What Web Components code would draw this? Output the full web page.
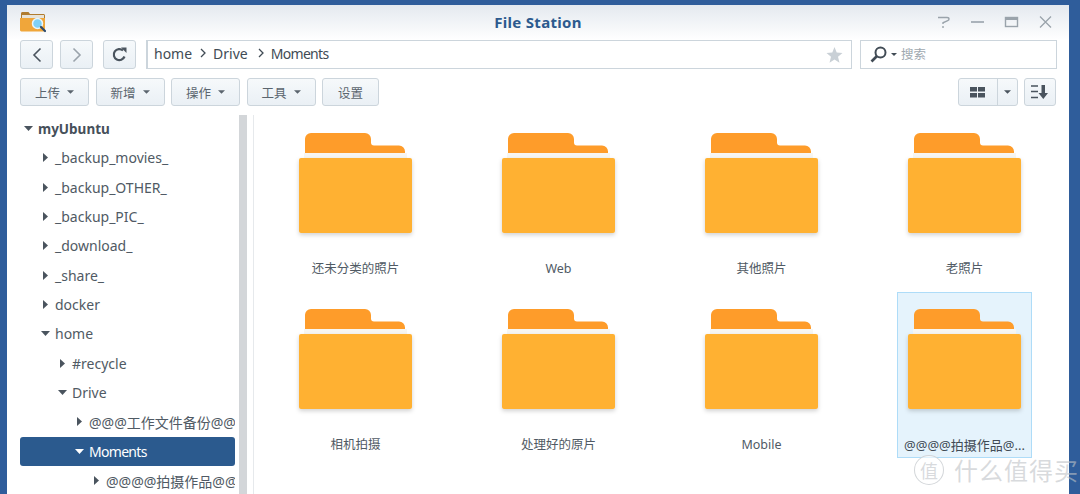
<!DOCTYPE html>
<html>
<head>
<meta charset="utf-8">
<title>File Station</title>
<style>
html, body { margin: 0; height: 100%; overflow: hidden; }
body {
    background: #2f5d9b;
    font-family: "Noto Sans", "Noto Sans CJK SC", sans-serif;
    color: #505a64;
}
</style>
</head>
<body>
<fs-window>
    <fs-titlebar slot="title">File Station</fs-titlebar>
    <fs-navbar slot="nav"></fs-navbar>
    <fs-toolbar slot="tools"></fs-toolbar>
    <fs-tree slot="tree"></fs-tree>
    <fs-grid slot="grid">
        <fs-folder>还未分类的照片</fs-folder>
        <fs-folder>Web</fs-folder>
        <fs-folder>其他照片</fs-folder>
        <fs-folder>老照片</fs-folder>
        <fs-folder>相机拍摄</fs-folder>
        <fs-folder>处理好的原片</fs-folder>
        <fs-folder>Mobile</fs-folder>
        <fs-folder selected>@@@@拍摄作品@...</fs-folder>
    </fs-grid>
</fs-window>
<fs-watermark></fs-watermark>

<script>
const caret = `<svg width="7" height="4" viewBox="0 0 8 4"><path d="M0 0h8L4 4z" fill="currentColor"/></svg>`;

class FsWindow extends HTMLElement {
    constructor() {
        super();
        this.attachShadow({mode: "open"}).innerHTML = `
            <style>
            :host {
                display: flex;
                flex-direction: column;
                box-sizing: border-box;
                width: 1062px;
                height: 489px;
                margin: 5px 0 0 7px;
                background: #fff;
                overflow: hidden;
            }
            .main {
                display: flex;
                flex: 1;
                min-height: 0;
                margin-top: 9px;
            }
            .bar {
                width: 8px;
                margin-left: 4px;
                background: #d3d6d9;
                flex: none;
            }
            .line {
                width: 1px;
                margin-left: 6px;
                background: #e6e9ec;
                flex: none;
            }
            </style>
            <slot name="title"></slot>
            <slot name="nav"></slot>
            <slot name="tools"></slot>
            <div class="main">
                <slot name="tree"></slot>
                <div class="bar"></div>
                <div class="line"></div>
                <slot name="grid"></slot>
            </div>
        `;
    }
}

class FsTitlebar extends HTMLElement {
    constructor() {
        super();
        this.attachShadow({mode: "open"}).innerHTML = `
            <style>
            :host {
                display: grid;
                grid-template-columns: 1fr auto 1fr;
                align-items: center;
                height: 35px;
                padding: 0 13px;
                background: linear-gradient(#e4e9ef, #ffffff);
            }
            .title {
                font-weight: 700;
                font-size: 15px;
                letter-spacing: .3px;
                color: #2c5a8e;
                padding-bottom: 2px;
            }
            .app { display: block; margin-top: -1px; }
            .ctl {
                display: flex;
                justify-content: flex-end;
                align-items: center;
                gap: 19px;
                padding-right: 3px;
                margin-top: -1px;
            }
            </style>
            <svg class="app" width="26" height="22" viewBox="0 0 26 22">
                <path d="M1 2.500C1 1.600 1.600 1 2.500 1h6L10 3h13.500c.8 0 1.500.7 1.500 1.500V8H1z" fill="#b07c30"/>
                <rect x="2" y="4" width="22" height="3" fill="#e7e3d8"/>
                <path d="M0 7h25v12c0 .8-.6 1.400-1.400 1.400H1.400C.6 20.400 0 19.800 0 19z" fill="#f0a63a"/>
                <circle cx="17.500" cy="12.500" r="5" fill="#7fd0f5" stroke="#e9f5fb" stroke-width="1.500"/>
                <path d="M21 16l4 4" stroke="#2b4a6c" stroke-width="2.200" stroke-linecap="round"/>
            </svg>
            <div class="title"><slot></slot></div>
            <div class="ctl">
                <svg width="15" height="14" viewBox="0 0 15 14"><path d="M2 2.500h9c1.500 0 2 .8 2 1.500 0 .8-.5 1.400-1.300 1.700L7 7.800V9M7 11v2" fill="none" stroke="#9aa3ab" stroke-width="1.400"/></svg>
                <svg width="15" height="14" viewBox="0 0 15 14"><path d="M1 7h13" stroke="#9aa3ab" stroke-width="1.600"/></svg>
                <svg width="15" height="14" viewBox="0 0 15 14"><rect x="1.500" y="2.500" width="12" height="9" fill="none" stroke="#9aa3ab" stroke-width="1.400"/><rect x="1" y="2" width="13" height="3" fill="#9aa3ab"/></svg>
                <svg width="15" height="14" viewBox="0 0 15 14"><path d="M2 1.500l11 11M13 1.500l-11 11" stroke="#9aa3ab" stroke-width="1.300"/></svg>
            </div>
        `;
    }
}

class FsButton extends HTMLElement {
    constructor() {
        super();
        this.attachShadow({mode: "open"}).innerHTML = `
            <style>
            :host {
                display: inline-flex;
                align-items: center;
                justify-content: center;
                gap: 7px;
                box-sizing: border-box;
                height: 29px;
                border: 1px solid #ccd5dc;
                border-radius: 3px;
                background: linear-gradient(#f6f9fb, #eaf0f5);
                font-size: 12.500px;
                color: #5b656e;
                flex: none;
            }
            svg, ::slotted(svg) { display: block; }
            </style>
            <slot></slot>
        `;
    }
}

class FsNavbar extends HTMLElement {
    constructor() {
        super();
        this.attachShadow({mode: "open"}).innerHTML = `
            <style>
            :host {
                display: flex;
                align-items: center;
                height: 29px;
                padding: 0 12px 0 13px;
            }
            fs-button { width: 33px; }
            .path {
                flex: none;
                display: flex;
                align-items: center;
                box-sizing: border-box;
                width: 706px;
                height: 29px;
                margin-left: 10px;
                padding: 0 8px 3px 6px;
                border: 1px solid #ccd5dc;
                border-left-width: 2px;
                font-size: 14px;
                color: #414b55;
            }
            .path svg { margin: 0 7px 0 8px; }
            .now { letter-spacing: -.7px; }
            .star { margin: 3px 0 0 auto !important; }
            .search {
                display: flex;
                align-items: center;
                box-sizing: border-box;
                width: 197px;
                height: 29px;
                margin-left: 8px;
                padding: 0 0 2px 9px;
                border: 1px solid #ccd5dc;
                font-size: 12.500px;
                color: #a0a8af;
            }
            .search span { margin-left: 4px; }
            .search .c { margin-left: 3px; color: #414b55; }
            </style>
            <fs-button>
                <svg width="10" height="16" viewBox="0 0 10 16"><path d="M8.500 1.500L2 8l6.500 6.500" fill="none" stroke="#4a545e" stroke-width="1.600"/></svg>
            </fs-button>
            <fs-button style="margin-left:7px">
                <svg width="10" height="16" viewBox="0 0 10 16"><path d="M1.500 1.500L8 8l-6.500 6.500" fill="none" stroke="#9aa3ab" stroke-width="1.600"/></svg>
            </fs-button>
            <fs-button style="margin-left:10px">
                <svg width="15" height="15" viewBox="0 0 15 15"><path d="M12.500 9.500A5.500 5.500 0 1 1 11 3.500" fill="none" stroke="#4a545e" stroke-width="2.200"/><path d="M9 .5h5.500V6z" fill="#4a545e"/></svg>
            </fs-button>
            <div class="path">
                home
                <svg width="6" height="10" viewBox="0 0 6 10"><path d="M1 1l4 4-4 4" fill="none" stroke="#414b55" stroke-width="1.300"/></svg>
                Drive
                <svg width="6" height="10" viewBox="0 0 6 10" style="margin-left:10px"><path d="M1 1l4 4-4 4" fill="none" stroke="#414b55" stroke-width="1.300"/></svg>
                <span class="now">Moments</span>
                <svg class="star" width="17" height="16" viewBox="0 0 17 16"><path d="M8.500 0l2.200 5.600 5.800.4-4.500 3.800 1.500 5.900-5-3.200-5 3.200 1.500-5.900L.5 6l5.800-.4z" fill="#c9d0d6"/></svg>
            </div>
            <div class="search">
                <svg width="18" height="17" viewBox="0 0 18 17" style="margin-top:2px"><circle cx="10.500" cy="6.500" r="5" fill="none" stroke="#414b55" stroke-width="2"/><path d="M7 10l-5.500 5.500" stroke="#414b55" stroke-width="2.600"/></svg>
                <span class="c" style="display:flex;margin-top:2px">${caret.replace('width="7" height="4"', 'width="6" height="3"')}</span>
                <span>搜索</span>
            </div>
        `;
    }
}

class FsToolbar extends HTMLElement {
    constructor() {
        super();
        this.attachShadow({mode: "open"}).innerHTML = `
            <style>
            :host {
                display: flex;
                align-items: center;
                height: 28px;
                margin-top: 9px;
                padding: 0 13px;
                gap: 6.500px;
            }
            fs-button { width: 69px; height: 28px; }
            .view { width: 60px; margin-left: auto; gap: 0; padding: 0; }
            .view div { display: flex; align-items: center; justify-content: center; height: 100%; }
            .view .a { width: 38px; border-right: 1px solid #ccd5dc; }
            .view .b { flex: 1; color: #4a545e; }
            .sort { width: 32px; }
            </style>
            <fs-button>上传 ${caret}</fs-button>
            <fs-button>新增 ${caret}</fs-button>
            <fs-button>操作 ${caret}</fs-button>
            <fs-button>工具 ${caret}</fs-button>
            <fs-button style="width:57px">设置</fs-button>
            <fs-button class="view">
                <div class="a"><svg width="15" height="11" viewBox="0 0 15 11"><path d="M0 0h7v4.500H0zM8 0h7v4.500H8zM0 6h7v4.500H0zM8 6h7v4.500H8z" fill="#4a545e"/></svg></div>
                <div class="b">${caret}</div>
            </fs-button>
            <fs-button class="sort">
                <svg width="18" height="14" viewBox="0 0 18 14"><path d="M0 1h7M0 6.500h7M0 12.500h7" stroke="#4a545e" stroke-width="1.500"/><path d="M10.500 0h3.500v8h3l-4.700 6-4.800-6h3z" fill="#4a545e"/></svg>
            </fs-button>
        `;
    }
}

class FsTreeRow extends HTMLElement {
    constructor() {
        super();
        this.attachShadow({mode: "open"}).innerHTML = `
            <style>
            :host {
                display: flex;
                align-items: center;
                box-sizing: border-box;
                height: 29.330px;
                flex: none;
                font-size: 14px;
                color: #505a64;
                white-space: nowrap;
                overflow: hidden;
                border-radius: 3px;
            }
            :host([root]) { font-weight: 700; color: #46505a; font-size: 13.500px; }
            :host([active]) { background: #2b5a8e; color: #fff; letter-spacing: -.7px; }
            .arrow {
                display: flex;
                align-items: center;
                justify-content: center;
                width: 11px;
                flex: none;
                margin-right: 4px;
                color: #4a545e;
            }
            :host([active]) .arrow { color: #fff; }
            </style>
            <span class="arrow" id="a"></span><slot></slot>
        `;
    }
    connectedCallback() {
        const level = Number(this.getAttribute("level") || 0);
        this.style.paddingLeft = (3 + level * 17) + "px";
        this.shadowRoot.getElementById("a").innerHTML = this.hasAttribute("open")
            ? `<svg width="9" height="5" viewBox="0 0 9 5"><path d="M0 0h9L4.500 5z" fill="currentColor"/></svg>`
            : `<svg width="5" height="9" viewBox="0 0 5 9"><path d="M0 0l5 4.500L0 9z" fill="currentColor"/></svg>`;
    }
}

class FsTree extends HTMLElement {
    constructor() {
        super();
        this.attachShadow({mode: "open"}).innerHTML = `
            <style>
            :host {
                display: flex;
                flex-direction: column;
                box-sizing: border-box;
                width: 215px;
                margin: -1px 0 0 13px;
                flex: none;
                overflow: hidden;
            }
            </style>
            <fs-tree-row root open level="0">myUbuntu</fs-tree-row>
            <fs-tree-row level="1">_backup_movies_</fs-tree-row>
            <fs-tree-row level="1">_backup_OTHER_</fs-tree-row>
            <fs-tree-row level="1">_backup_PIC_</fs-tree-row>
            <fs-tree-row level="1">_download_</fs-tree-row>
            <fs-tree-row level="1">_share_</fs-tree-row>
            <fs-tree-row level="1">docker</fs-tree-row>
            <fs-tree-row open level="1">home</fs-tree-row>
            <fs-tree-row level="2">#recycle</fs-tree-row>
            <fs-tree-row open level="2">Drive</fs-tree-row>
            <fs-tree-row level="3">@@@工作文件备份@@@</fs-tree-row>
            <fs-tree-row open active level="3">Moments</fs-tree-row>
            <fs-tree-row level="4">@@@@拍摄作品@@</fs-tree-row>
        `;
    }
}

class FsGrid extends HTMLElement {
    constructor() {
        super();
        this.attachShadow({mode: "open"}).innerHTML = `
            <style>
            :host {
                display: grid;
                grid-template-columns: repeat(4, 135px);
                grid-auto-rows: 166px;
                column-gap: 68px;
                row-gap: 10px;
                padding: 1px 0 0 34px;
                align-content: start;
            }
            </style>
            <slot></slot>
        `;
    }
}

class FsFolder extends HTMLElement {
    constructor() {
        super();
        this.attachShadow({mode: "open"}).innerHTML = `
            <style>
            :host {
                display: flex;
                flex-direction: column;
                align-items: center;
                box-sizing: border-box;
                padding-top: 17px;
                border: 1px solid transparent;
                font-size: 12.500px;
                color: #505a64;
                white-space: nowrap;
            }
            :host([selected]) { background: #e5f3fc; border-color: #aedcf8; font-size: 13px; color: #414b55; }
            svg { display: block; margin-top: -1px; overflow: visible; }
            .name { margin-top: 25px; line-height: 18px; }
            </style>
            <svg width="113" height="102" viewBox="0 0 113 102">
                <defs>
                    <filter id="s" x="-10%" y="-10%" width="120%" height="120%">
                        <feDropShadow dx="0" dy="2" stdDeviation="2" flood-color="#000" flood-opacity="0.18"/>
                    </filter>
                </defs>
                <path d="M6 24V6a6 6 0 0 1 6-6h54a6 6 0 0 1 6 6v3.500a3 3 0 0 0 3 3h25a6 6 0 0 1 6 6V24z" fill="#fe9c2a"/>
                <rect x="5" y="20" width="103" height="6" fill="#f7f6f2"/>
                <rect x="0" y="25" width="113" height="75" rx="2" fill="#ffb133" filter="url(#s)"/>
            </svg>
            <div class="name"><slot></slot></div>
        `;
    }
}

class FsWatermark extends HTMLElement {
    constructor() {
        super();
        this.attachShadow({mode: "open"}).innerHTML = `
            <style>
            :host {
                position: absolute;
                left: 914px;
                top: 452px;
                display: flex;
                align-items: center;
                gap: 10px;
                color: rgba(190, 194, 198, 0.6);
                font-size: 24px;
                letter-spacing: 1px;
                white-space: nowrap;
            }
            .logo {
                display: flex;
                align-items: center;
                justify-content: center;
                width: 28px;
                height: 28px;
                border-radius: 50%;
                border: 1.500px solid rgba(200, 204, 208, 0.8);
                font-size: 18px;
                letter-spacing: 0;
                background: rgba(255,255,255,0.6);
            }
            .clip { width: 142px; overflow: hidden; }
            </style>
            <span class="logo">值</span>
            <span class="clip">什么值得买</span>
        `;
    }
}

customElements.define("fs-window", FsWindow);
customElements.define("fs-titlebar", FsTitlebar);
customElements.define("fs-button", FsButton);
customElements.define("fs-navbar", FsNavbar);
customElements.define("fs-toolbar", FsToolbar);
customElements.define("fs-tree-row", FsTreeRow);
customElements.define("fs-tree", FsTree);
customElements.define("fs-grid", FsGrid);
customElements.define("fs-folder", FsFolder);
customElements.define("fs-watermark", FsWatermark);
</script>
</body>
</html>
